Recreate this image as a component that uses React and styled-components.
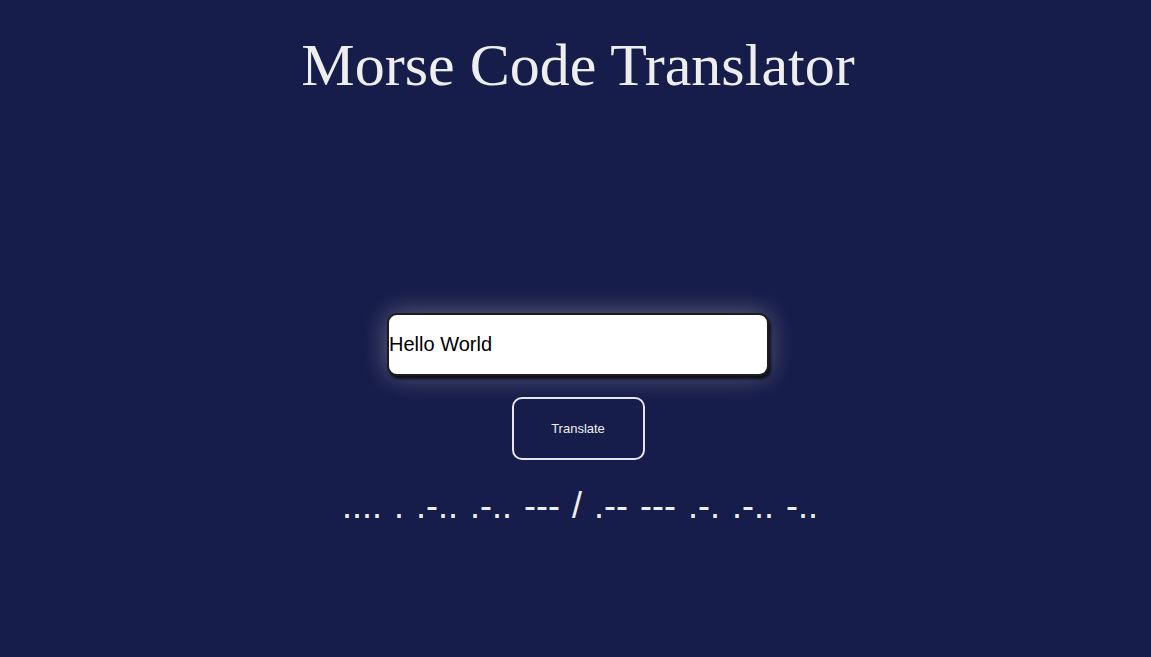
import React, { useState } from "react";
import styled, { createGlobalStyle } from "styled-components";

const GlobalStyle = createGlobalStyle`
  html, body {
    margin: 0;
    padding: 0;
    background-color: #171d4a;
  }
`;

const Page = styled.div`
  min-height: 100vh;
  display: flex;
  flex-direction: column;
  align-items: center;
  padding: 31px 0 0 5px;
  box-sizing: border-box;
  background-color: #171d4a;
`;

const Title = styled.h1`
  margin: 0;
  font-family: "Liberation Serif", "Times New Roman", serif;
  font-size: 60px;
  font-weight: normal;
  color: #eeeeee;
`;

const Form = styled.div`
  margin-top: 213px;
  display: flex;
  flex-direction: column;
  align-items: center;
`;

const TextInput = styled.input`
  width: 382px;
  height: 63px;
  box-sizing: border-box;
  padding: 0;
  border: 2px solid #1c1c1c;
  border-radius: 10px;
  background: #fff;
  font-family: "Liberation Sans", Arial, sans-serif;
  font-size: 20px;
  color: #000;
  outline: none;
  box-shadow: 2px 3px 3px rgba(0, 0, 0, 0.75),
    0 0 26px rgba(255, 255, 255, 0.32);
`;

const Button = styled.button`
  margin-top: 21px;
  width: 133px;
  height: 63px;
  box-sizing: border-box;
  background: transparent;
  border: 2px solid #e6e6ee;
  border-radius: 10px;
  color: #eeeeee;
  font-family: "Liberation Sans", Arial, sans-serif;
  font-size: 13px;
  cursor: pointer;
`;

const Output = styled.p`
  margin: 25px 0 0 4px;
  font-family: "Liberation Sans", Arial, sans-serif;
  font-size: 36px;
  word-spacing: 2px;
  color: #eeeeee;
  white-space: pre;
`;

const CODES = {
  a: ".-", b: "-...", c: "-.-.", d: "-..", e: ".", f: "..-.", g: "--.",
  h: "....", i: "..", j: ".---", k: "-.-", l: ".-..", m: "--", n: "-.",
  o: "---", p: ".--.", q: "--.-", r: ".-.", s: "...", t: "-", u: "..-",
  v: "...-", w: ".--", x: "-..-", y: "-.--", z: "--..", " ": "/",
};

function toMorse(text) {
  return text
    .toLowerCase()
    .split("")
    .map((c) => CODES[c] || "")
    .join(" ");
}

function App() {
  const [text, setText] = useState("Hello World");
  const [morse, setMorse] = useState(toMorse("Hello World"));

  return (
    <>
      <GlobalStyle />
      <Page>
        <Title>Morse Code Translator</Title>
        <Form>
          <TextInput value={text} onChange={(e) => setText(e.target.value)} />
          <Button onClick={() => setMorse(toMorse(text))}>Translate</Button>
          <Output>{morse}</Output>
        </Form>
      </Page>
    </>
  );
}

export default App;
